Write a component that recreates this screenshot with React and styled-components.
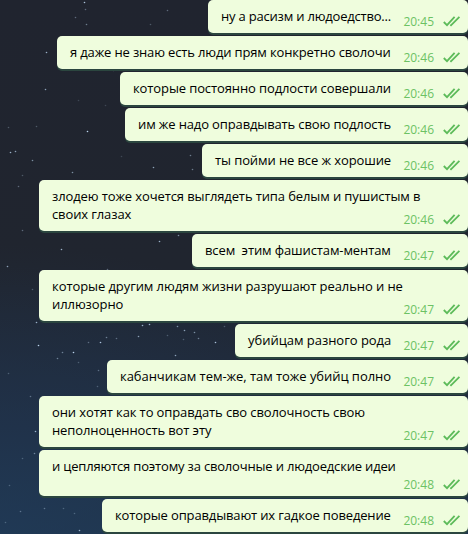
import styled, { createGlobalStyle } from 'styled-components';

const GlobalStyle = createGlobalStyle`
    body {
        margin: 0;
        overflow: hidden;
    }
`

const Chat = styled.main`
    position: relative;
    box-sizing: border-box;
    height: 534px;
    overflow: hidden;
    background:
        radial-gradient(ellipse 420px 290px at 0 100%, rgba(32, 60, 92, 0.6), transparent),
        linear-gradient(#20242f 0%, #20252f 50%, #202c3f 80%, #20344a 100%);
    font-family: "Open Sans", "Noto Sans", sans-serif;
`

const Sky = styled.svg`
    position: absolute;
    inset: 0;
`

const List = styled.div`
    position: relative;
    display: flex;
    flex-direction: column;
    align-items: flex-end;
    gap: 3px;
`

const Bubble = styled.div`
    box-sizing: border-box;
    display: flex;
    justify-content: space-between;
    flex-shrink: 0;
    width: ${props => props.$width}px;
    height: ${props => props.$height || 33}px;
    padding: 7px 7px 0 13px;
    border-radius: 5px;
    background-color: #effddd;
    box-shadow: 0 2px 0 #2b463f;
`

const Text = styled.div`
    display: flex;
    flex-direction: column;
    align-items: flex-start;
    color: #000;
    font-size: 13px;
    line-height: 18px;
    letter-spacing: ${props => props.$spacing || 0}px;
    white-space: pre;
`

const Meta = styled.div`
    display: flex;
    align-items: center;
    align-self: flex-end;
    gap: 9px;
    height: 16px;
    margin-bottom: 4px;
    margin-left: -60px;
`

const Time = styled.span`
    padding-top: 2px;
    color: #6cc264;
    font-size: 12px;
    line-height: 16px;
`

const Checks = styled.svg`
    width: 18px;
    height: 11px;
    flex-shrink: 0;
    fill: none;
    stroke: #5dbb5a;
    stroke-width: 1.8;
`

const messages = [
  { lines: ['ну а расизм и людоедство...'], time: '20:45', width: 260, spacing: -0.2 },
  { lines: ['я даже не знаю есть люди прям конкретно сволочи'], time: '20:46', width: 411, spacing: -0.15 },
  { lines: ['которые постоянно подлости совершали'], time: '20:46', width: 348, spacing: -0.11 },
  { lines: ['им же надо оправдывать свою подлость'], time: '20:46', width: 343, spacing: -0.13 },
  { lines: ['ты пойми не все ж хорошие'], time: '20:46', width: 266, spacing: -0.1 },
  { lines: ['злодею тоже хочется выглядеть типа белым и пушистым в', 'своих глазах'], time: '20:46', width: 429, height: 51, spacing: -0.11 },
  { lines: ['всем  этим фашистам-ментам'], time: '20:47', width: 276, spacing: -0.11 },
  { lines: ['которые другим людям жизни разрушают реально и не', 'иллюзорно'], time: '20:47', width: 429, height: 51, spacing: -0.08 },
  { lines: ['убийцам разного рода'], time: '20:47', width: 233, spacing: -0.03 },
  { lines: ['кабанчикам тем-же, там тоже убийц полно'], time: '20:47', width: 361, spacing: -0.05 },
  { lines: ['они хотят как то оправдать сво сволочность свою', 'неполноценность вот эту'], time: '20:47', width: 429, height: 51, spacing: -0.11 },
  { lines: ['и цепляются поэтому за сволочные и людоедские идеи'], time: '20:48', width: 429, height: 46, spacing: -0.18 },
  { lines: ['которые оправдывают их гадкое поведение'], time: '20:48', width: 366, spacing: -0.14 },
]

// x, y, opacity
const stars = [
  [84, 2, 0.9], [85, 9, 0.4], [75, 17, 0.4], [86, 24, 0.5], [167, 10, 0.4], [150, 24, 0.3],
  [46, 52, 0.8], [45, 89, 0.7], [87, 131, 1], [10, 152, 0.8], [15, 151, 0.7], [32, 160, 0.6],
  [8, 127, 0.3], [36, 126, 0.3], [153, 167, 0.7], [190, 155, 0.5], [192, 169, 0.5],
  [72, 172, 0.6], [22, 175, 0.3], [18, 186, 0.4], [22, 230, 0.4], [61, 249, 0.8],
  [159, 241, 0.8], [178, 235, 0.6], [7, 266, 0.7], [107, 269, 0.4], [32, 289, 0.3],
  [36, 322, 0.8], [38, 345, 1], [57, 358, 0.5], [62, 352, 0.5], [73, 352, 1], [88, 342, 0.4],
  [100, 342, 0.9], [106, 337, 0.5], [116, 338, 0.4], [98, 370, 0.4], [97, 386, 0.3], [78, 362, 0.3],
  [8, 373, 0.3], [30, 396, 0.4], [138, 336, 0.7], [142, 325, 0.8], [149, 324, 0.8], [177, 326, 0.6],
  [184, 330, 0.7], [194, 332, 0.6], [198, 338, 0.5], [215, 342, 0.9], [175, 355, 0.7],
  [183, 339, 0.3], [167, 335, 0.3], [224, 326, 0.3],
  [35, 431, 0.8], [34, 453, 0.5], [22, 458, 0.3], [9, 485, 0.3], [20, 511, 0.4],
  [44, 508, 0.4], [63, 508, 0.3], [74, 513, 0.3], [5, 522, 0.3], [79, 530, 0.8],
  [113, 70, 0.4], [78, 100, 0.2], [105, 105, 0.2], [121, 156, 0.2],
]

function DoubleCheck() {
  return (
    <Checks viewBox="0 0 18 11">
      <path d="M0.8 6 4 9.2 11.6 0.9" />
      <path d="M7.4 9.8 16.4 0.9M8.2 9.6 7.6 8.4" />
    </Checks>
  )
}

function App() {
  return (
    <>
        <GlobalStyle />
        <Chat>
            <Sky width="468" height="534">
                {stars.map(([x, y, opacity]) => (
                    <circle key={`${x}-${y}`} cx={x + 0.5} cy={y + 0.5} r="0.8" fill="#b9d3ec" opacity={opacity} />
                ))}
            </Sky>
            <List>
                {messages.map(({ lines, time, width, height, spacing }) => (
                    <Bubble key={lines[0]} $width={width} $height={height}>
                        <Text $spacing={spacing}>
                            {lines.map(line => <span key={line}>{line}</span>)}
                        </Text>
                        <Meta>
                            <Time>{time}</Time>
                            <DoubleCheck />
                        </Meta>
                    </Bubble>
                ))}
            </List>
        </Chat>
    </>
  )
}

export default App;
